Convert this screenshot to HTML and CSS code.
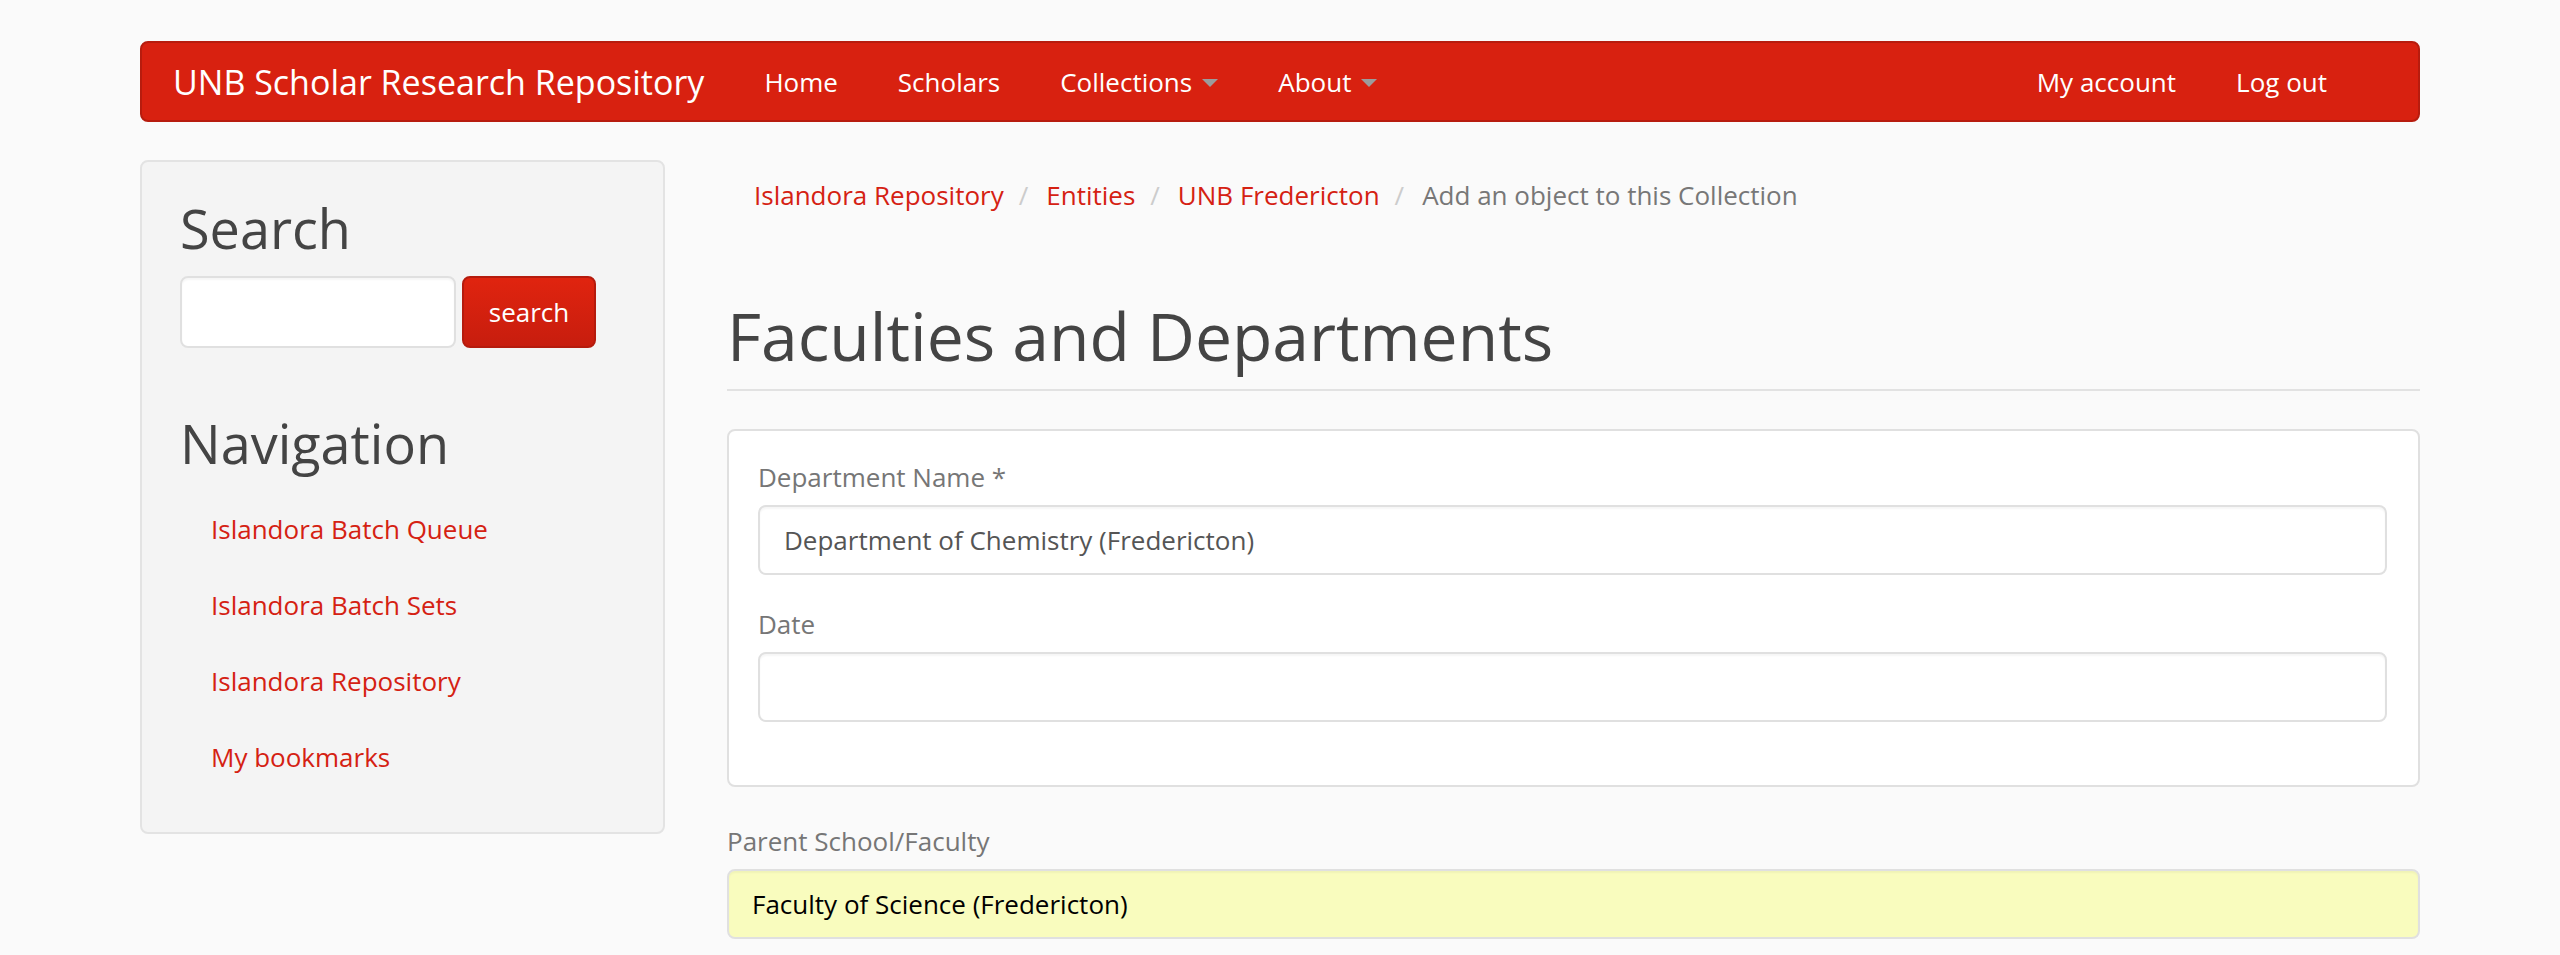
FILE: index.html
```html
<!DOCTYPE html>
<html lang="en">
<head>
<meta charset="utf-8">
<title>Faculties and Departments | UNB Scholar Research Repository</title>
<link rel="stylesheet" href="styles.css">
</head>
<body>
<div class="container">
  <nav class="navbar">
    <a class="brand" href="#">UNB Scholar Research Repository</a>
    <ul class="nav">
      <li><a href="#">Home</a></li>
      <li><a href="#">Scholars</a></li>
      <li><a href="#">Collections<span class="caret"></span></a></li>
      <li><a href="#">About<span class="caret"></span></a></li>
    </ul>
    <ul class="nav nav-right">
      <li><a href="#">My account</a></li>
      <li><a href="#">Log out</a></li>
    </ul>
  </nav>

  <div class="row">
    <aside class="sidebar">
      <h2 class="side-title">Search</h2>
      <form class="search-form">
        <input class="search-input" type="text" aria-label="Search">
        <button class="btn-search" type="button">search</button>
      </form>
      <h2 class="side-title nav-title">Navigation</h2>
      <ul class="side-nav">
        <li><a href="#">Islandora Batch Queue</a></li>
        <li><a href="#">Islandora Batch Sets</a></li>
        <li><a href="#">Islandora Repository</a></li>
        <li><a href="#">My bookmarks</a></li>
      </ul>
    </aside>

    <main class="main">
      <ol class="breadcrumb">
        <li><a href="#">Islandora Repository</a></li>
        <li><a href="#">Entities</a></li>
        <li><a href="#">UNB Fredericton</a></li>
        <li class="active">Add an object to this Collection</li>
      </ol>
      <h1 class="page-header">Faculties and Departments</h1>

      <div class="panel">
        <div class="field">
          <label class="label">Department Name *</label>
          <div class="input">Department of Chemistry (Fredericton)</div>
        </div>
        <div class="field">
          <label class="label">Date</label>
          <div class="input"></div>
        </div>
      </div>

      <div class="field field-outer">
        <label class="label">Parent School/Faculty</label>
        <div class="input input-auto">Faculty of Science (Fredericton)</div>
      </div>
    </main>
  </div>
</div>
</body>
</html>
```

FILE: styles.css
```css
* { box-sizing: border-box; }

body {
  margin: 0;
  background: #fafafa;
  font-family: "Open Sans", "Liberation Sans", sans-serif;
  font-size: 26px;
  line-height: 40px;
  color: #444;
}

.container {
  width: 2280px;
  margin: 0 auto;
  padding-top: 41px;
}

/* Navbar */
.navbar {
  height: 81px;
  display: flex;
  align-items: center;
  background: #d82110;
  border: 2px solid #b71c0e;
  border-radius: 8px;
}

.brand {
  color: #fff;
  text-decoration: none;
  font-size: 34px;
  padding: 0 30px 0 31px;
}

.nav {
  display: flex;
  list-style: none;
  margin: 0;
  padding: 0;
}

.nav a {
  display: flex;
  align-items: center;
  padding: 0 30px;
  color: #fff;
  text-decoration: none;
}

.nav-right {
  margin-left: auto;
  margin-right: 61px;
}

.caret {
  display: inline-block;
  width: 0;
  height: 0;
  margin-left: 10px;
  margin-top: 2px;
  border-top: 8px solid #9c9c9c;
  border-left: 8px solid transparent;
  border-right: 8px solid transparent;
}

/* Layout */
.row {
  display: flex;
  gap: 62px;
  margin-top: 38px;
  align-items: flex-start;
}

/* Sidebar */
.sidebar {
  width: 525px;
  flex: none;
  background: #f4f4f4;
  border: 2px solid #e3e3e3;
  border-radius: 8px;
  padding: 33px 38px 37px 38px;
}

.side-title {
  margin: 0 0 15px;
  font-size: 54px;
  font-weight: 400;
  line-height: 66px;
  color: #444;
}

.nav-title {
  margin-top: 62px;
  margin-bottom: 15px;
}

.search-form {
  display: flex;
  gap: 6px;
}

.search-input {
  width: 276px;
  height: 72px;
  border: 2px solid #e0e0e0;
  border-radius: 8px;
  background: #fff;
  box-shadow: inset 0 2px 2px rgba(0,0,0,0.04);
  font: inherit;
}

.btn-search {
  width: 134px;
  height: 72px;
  border: 2px solid #b51b0d;
  border-radius: 8px;
  background: linear-gradient(#e0240f, #c71d0e);
  color: #fff;
  font: inherit;
  padding: 0;
}

.side-nav {
  list-style: none;
  margin: 0;
  padding: 0;
}

.side-nav a {
  display: block;
  padding: 18px 30px 18px 31px;
  color: #d52112;
  text-decoration: none;
}

/* Main */
.main {
  flex: 1;
  min-width: 0;
}

.breadcrumb {
  list-style: none;
  display: flex;
  margin: 0;
  padding: 15px 27px 17px;
}

.breadcrumb li + li::before {
  content: "/";
  color: #ccc;
  padding: 0 18px 0 15px;
}

.breadcrumb a {
  color: #d52112;
  text-decoration: none;
}

.breadcrumb .active {
  color: #777;
}

.page-header {
  margin: 64px 0 38px;
  padding-bottom: 14px;
  border-bottom: 2px solid #e2e2e2;
  font-size: 66px;
  font-weight: 400;
  line-height: 79px;
  color: #444;
}

.panel {
  background: #fff;
  border: 2px solid #e0e0e0;
  border-radius: 8px;
  padding: 26px 31px 63px 29px;
}

.field + .field {
  margin-top: 29px;
}

.label {
  display: block;
  color: #767676;
  margin-bottom: 8px;
}

.input {
  height: 70px;
  border: 2px solid #e0e0e0;
  border-radius: 8px;
  background: #fff;
  box-shadow: inset 0 2px 2px rgba(0,0,0,0.04);
  padding: 13px 24px;
  color: #555;
}

.field-outer {
  margin-top: 34px;
}

.input-auto {
  background: #f9fcbe;
  color: #000;
  padding-left: 23px;
}
```
